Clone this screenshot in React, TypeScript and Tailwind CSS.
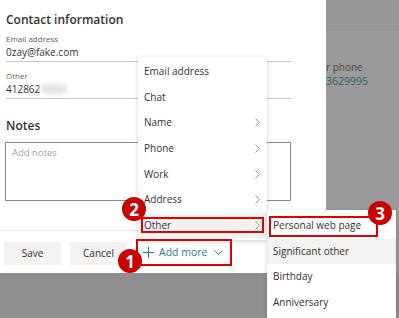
import React from 'react';

const font = 'font-["Open_Sans","Noto_Sans",sans-serif]';

function Chevron({ className = '' }: { className?: string }) {
  return (
    <svg width="5" height="9" viewBox="0 0 5 9" className={className}>
      <path d="M0.5 0.5 L4.3 4.5 L0.5 8.5" fill="none" stroke="#8a8886" strokeWidth="0.9" />
    </svg>
  );
}

function Badge({ n, className }: { n: string; className: string }) {
  return (
    <div
      className={`absolute flex h-[24px] w-[24px] items-center justify-center rounded-full bg-[#c80000] text-[17px] font-bold leading-none text-white ${className}`}
    >
      {n}
    </div>
  );
}

function Field({ label, value, blur }: { label: string; value: string; blur?: boolean }) {
  return (
    <div className="mr-[35px] border-b border-[#c8c6c4] pb-[2px]">
      <div className="text-[8px] leading-[12px] text-[#605e5c]">{label}</div>
      <div className="flex h-[14px] items-center text-[10px] leading-[14px] text-[#323130]">
        {value}
        {blur && <span className="ml-[1px] h-[10px] w-[26px] rounded-sm bg-[#e4e4e4] blur-[2px]" />}
      </div>
    </div>
  );
}

const mainItems: { label: string; sub?: boolean }[] = [
  { label: 'Email address' },
  { label: 'Chat' },
  { label: 'Name', sub: true },
  { label: 'Phone', sub: true },
  { label: 'Work', sub: true },
  { label: 'Address', sub: true },
  { label: 'Other', sub: true },
];

const otherItems = ['Personal web page', 'Significant other', 'Birthday', 'Anniversary'];

export default function App() {
  return (
    <div className={`relative h-[318px] w-[399px] overflow-hidden bg-[#8e8e8e] ${font}`}>
      <div className="flex h-[273px]">
        {/* dialog */}
        <div className="flex w-[326px] flex-col bg-white pl-[6px]">
          <h2 className="mt-[10px] h-[20px] text-[12px] font-semibold leading-[20px] text-[#323130]">Contact information</h2>
          <div className="mt-[3px]">
            <Field label="Email address" value="0zay@fake.com" />
          </div>
          <div className="mt-[8px]">
            <Field label="Other" value="412862" blur />
          </div>
          <h2 className="mt-[17px] h-[20px] text-[12px] font-semibold leading-[20px] text-[#323130]">Notes</h2>
          <div className="-ml-[1px] mr-[35px] mt-[6px] h-[59px] border border-[#8a8886] px-[6px] py-[3px] text-[9.5px] leading-[14px] text-[#a19f9d]">
            Add notes
          </div>
          <div className="-ml-[6px] mt-[29px] flex items-center gap-[9px] border-t border-[#edebe9] pl-[4px] pt-[11px]">
            <button className="h-[23px] w-[57px] bg-[#f3f2f1] text-[10px] text-[#323130]">Save</button>
            <button className="h-[23px] w-[57px] bg-[#f3f2f1] text-[10px] text-[#323130]">Cancel</button>
            <div className="-mt-[2px] ml-[7px] flex items-center gap-[5px] text-[10.5px] text-[#1c7f88]">
              <svg width="11" height="11" viewBox="0 0 11 11">
                <path d="M5.5 0 V11 M0 5.5 H11" stroke="#1c7f88" strokeWidth="1" />
              </svg>
              <span>Add more</span>
              <svg width="9" height="5" viewBox="0 0 9 5" className="ml-[2px]">
                <path d="M0.5 0.5 L4.5 4.3 L8.5 0.5" fill="none" stroke="#1c7f88" strokeWidth="0.9" />
              </svg>
            </div>
          </div>
        </div>
        {/* page behind */}
        <div className="flex-1 overflow-hidden bg-[#9a9a9a]">
          <div className="h-[30px] border-b border-[#929292] bg-[#979797]" />
          <div className="mt-[31px] text-[10px] leading-[13px] text-[#4a4a4a]">r phone</div>
          <div className="text-[10.5px] leading-[14px] text-[#2c5f66]">3629995</div>
        </div>
      </div>

      {/* Add more menu */}
      <div className="absolute left-[138px] top-[57px] w-[129px] bg-white py-[2px] shadow-[0_1px_4px_rgba(0,0,0,0.2)]">
        {mainItems.map((it) => (
          <div
            key={it.label}
            className={`flex h-[25.6px] items-center justify-between pl-[6px] pr-[7px] text-[10px] text-[#323130] ${
              it.label === 'Other' ? 'bg-[#f3f2f1]' : ''
            }`}
          >
            <span>{it.label}</span>
            {it.sub && <Chevron />}
          </div>
        ))}
      </div>

      {/* Other submenu */}
      <div className="absolute left-[267px] top-[210px] w-[129px] bg-white py-[3px] shadow-[0_1px_4px_rgba(0,0,0,0.2)]">
        {otherItems.map((t) => (
          <div
            key={t}
            className={`flex h-[25.6px] items-center pl-[6px] text-[10px] text-[#323130] ${
              t === 'Significant other' ? 'bg-[#f3f2f1]' : ''
            }`}
          >
            {t}
          </div>
        ))}
      </div>

      {/* callouts */}
      <div className="absolute left-[136px] top-[239px] h-[27px] w-[96px] border-2 border-[#e00000]" />
      <div className="absolute left-[141px] top-[217px] h-[16px] w-[123px] border-2 border-[#e00000]" />
      <div className="absolute left-[269px] top-[216px] h-[21px] w-[109px] border-2 border-[#e00000]" />
      <Badge n="1" className="left-[118px] top-[249px]" />
      <Badge n="2" className="left-[122px] top-[197px]" />
      <Badge n="3" className="left-[368px] top-[201px]" />
    </div>
  );
}
